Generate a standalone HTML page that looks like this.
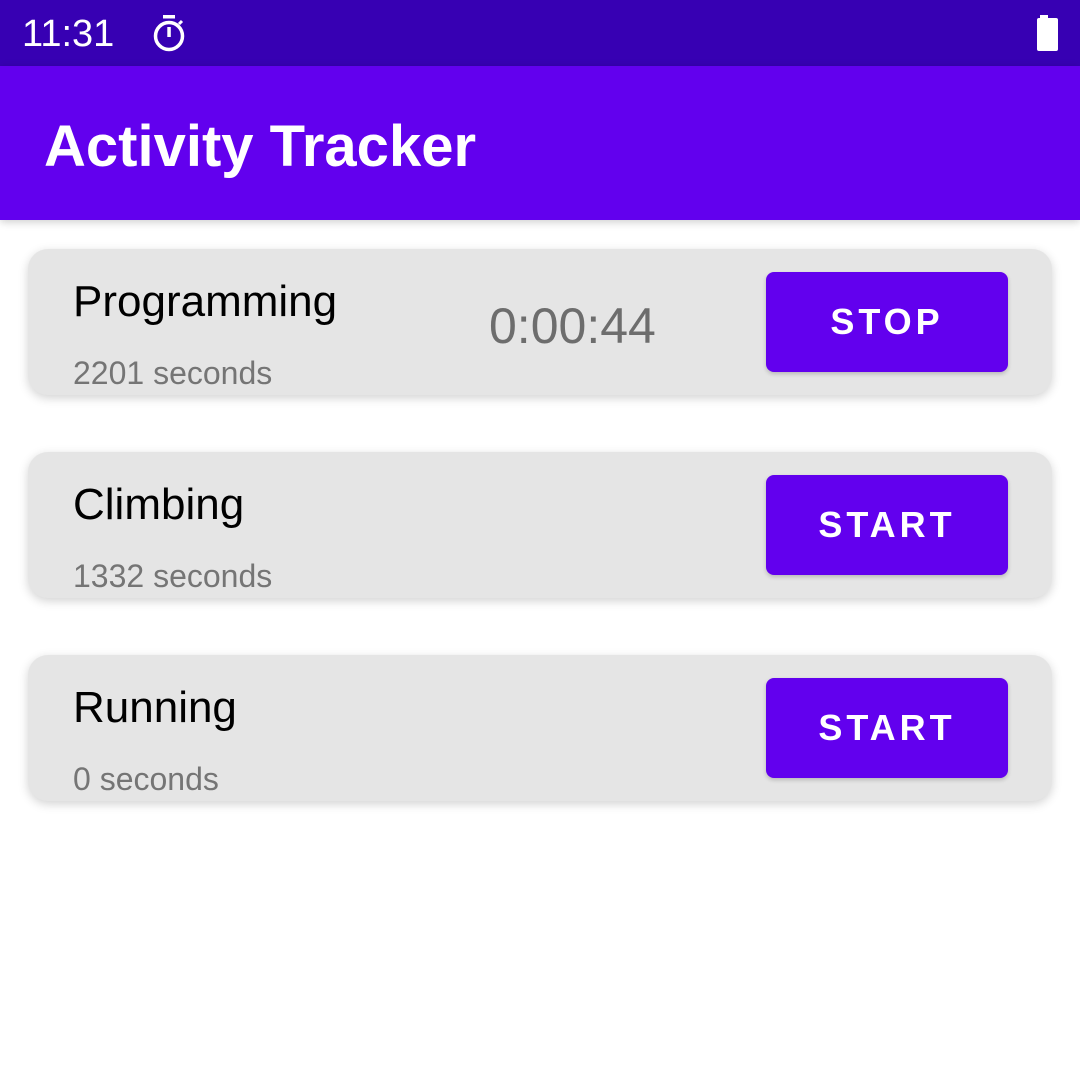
<!DOCTYPE html>
<html><head><style>
*{margin:0;padding:0;box-sizing:border-box}
body{width:1080px;height:1080px;background:#fff;font-family:"Liberation Sans",Roboto,sans-serif;position:relative;overflow:hidden}
.sb{position:absolute;top:0;left:0;width:1080px;height:66px;background:#3700B3}
.ab{position:absolute;top:66px;left:0;width:1080px;height:154px;background:#6200EE;box-shadow:0 2px 8px rgba(0,0,0,.2)}
.card{position:absolute;left:28px;width:1024px;height:146px;background:#E5E5E5;border-radius:20px;box-shadow:0 3px 10px rgba(0,0,0,.18)}
.t{position:absolute;left:45px;top:28px;font-size:44px;color:#000}
.s{position:absolute;left:45px;top:106px;font-size:32px;color:#757575;line-height:36px}
.btn{position:absolute;left:738px;top:23px;width:242px;height:100px;background:#6200EE;border-radius:8px;color:#fff;font-size:36px;font-weight:bold;letter-spacing:4px;text-align:center;line-height:100px;box-shadow:0 2px 4px rgba(0,0,0,.2)}
</style></head><body>
<div class="sb">
<div style="position:absolute;left:22px;top:13px;color:#fff;font-size:38px">11:31</div>
<svg style="position:absolute;left:150px;top:13px" width="38" height="40" viewBox="0 0 38 40"><rect x="13" y="2" width="12" height="3.5" fill="#fff"/><circle cx="19" cy="23" r="13.5" fill="none" stroke="#fff" stroke-width="3.5"/><rect x="17.3" y="14" width="3.5" height="10" fill="#fff"/><path d="M29 11l3-3" stroke="#fff" stroke-width="3"/></svg>
<div style="position:absolute;left:1040px;top:15px;width:8px;height:4px;background:#fff"></div>
<div style="position:absolute;left:1037px;top:18px;width:21px;height:33px;background:#fff;border-radius:2px"></div>
</div>
<div class="ab"><div style="position:absolute;left:44px;top:47px;color:#fff;font-size:58px;font-weight:bold">Activity Tracker</div></div>
<div class="card" style="top:249px"><div class="t">Programming</div><div class="s">2201 seconds</div>
<div style="position:absolute;left:461px;top:48px;font-size:50px;color:#6d6d6d">0:00:44</div>
<div class="btn">STOP</div></div>
<div class="card" style="top:452px"><div class="t">Climbing</div><div class="s">1332 seconds</div><div class="btn">START</div></div>
<div class="card" style="top:655px"><div class="t">Running</div><div class="s">0 seconds</div><div class="btn">START</div></div>
</body></html>
